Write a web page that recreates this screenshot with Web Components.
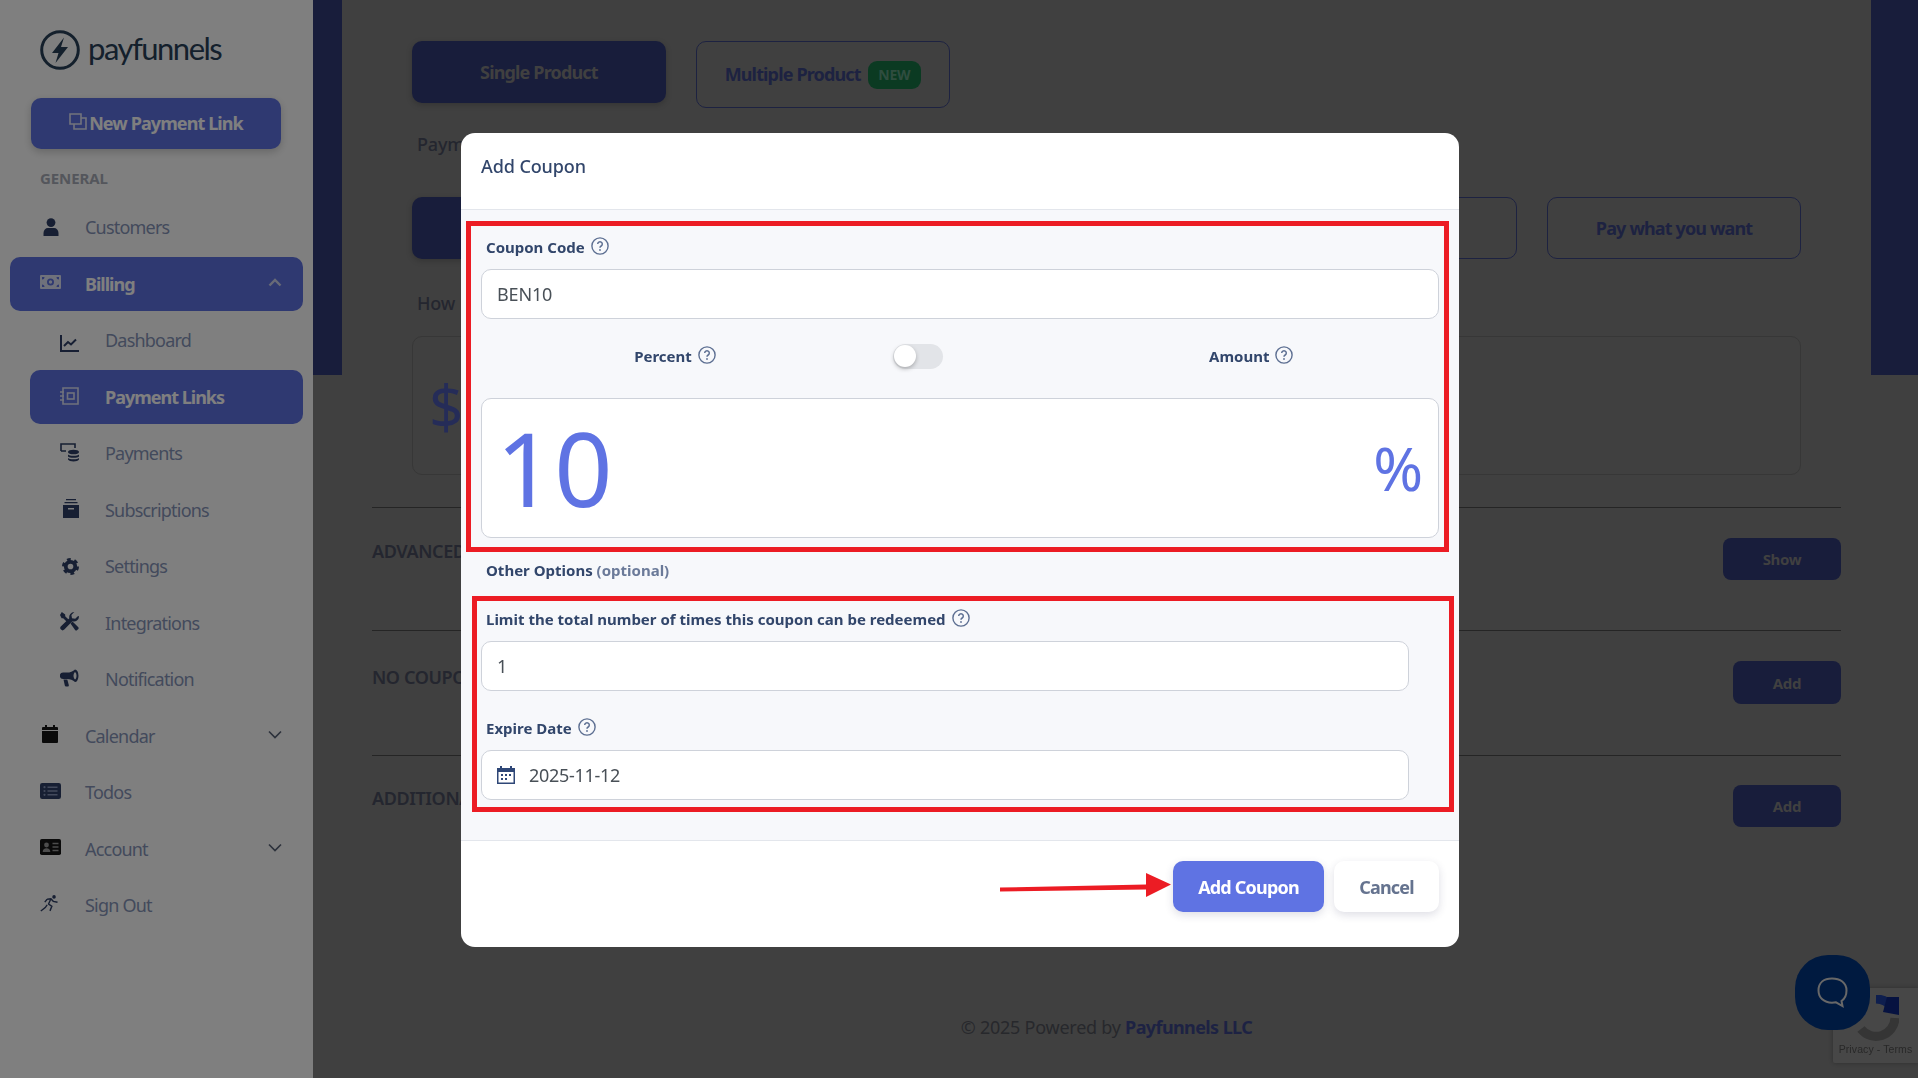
<!DOCTYPE html>
<html>
<head>
<meta charset="utf-8">
<title>Add Coupon</title>
<style>
html,body{margin:0;padding:0;height:100%;overflow:hidden;background:#808080;}
body{font-family:"Noto Sans","Open Sans",sans-serif;}
pf-page{display:grid;grid-template-columns:313px 1fr;height:1078px;}
</style>
</head>
<body>
<pf-page>
    <pf-sidebar></pf-sidebar>
    <pf-main></pf-main>
</pf-page>
<pf-widgets></pf-widgets>
<pf-backdrop></pf-backdrop>
<pf-modal></pf-modal>

<script>
const ICONS = {
    user:`<svg viewBox="0 0 16 18" width="16" height="18"><circle cx="8" cy="4.600" r="4.400" fill="currentColor"/><path d="M0.500 18V15c0-3 2-5 4.500-5h6c2.500 0 4.500 2 4.500 5v3z" fill="currentColor"/></svg>`,
    money:`<svg viewBox="0 0 21 14" width="21" height="14"><path fill-rule="evenodd" fill="currentColor" d="M1 0h19a1 1 0 0 1 1 1v12a1 1 0 0 1-1 1H1a1 1 0 0 1-1-1V1a1 1 0 0 1 1-1zM10.500 3.500a3.500 3.500 0 1 0 0 7 3.500 3.500 0 0 0 0-7zM2 2v2.500A2.500 2.500 0 0 0 4.500 2zM19 2h-2.500A2.500 2.500 0 0 0 19 4.500zM2 12h2.500A2.500 2.500 0 0 0 2 9.500zM19 12V9.500A2.500 2.500 0 0 0 16.500 12z"/><circle cx="10.500" cy="7" r="1.700" fill="currentColor"/></svg>`,
    chart:`<svg viewBox="0 0 19 17" width="19" height="17"><path d="M1 0v16h18" fill="none" stroke="currentColor" stroke-width="2"/><path d="M4 11l4-4 3 2.500 5-5" fill="none" stroke="currentColor" stroke-width="2"/></svg>`,
    notebook:`<svg viewBox="0 0 19 18" width="19" height="18"><path d="M3 1h15v16H3z" fill="none" stroke="currentColor" stroke-width="1.600"/><rect x="7.500" y="6" width="6.500" height="6" fill="none" stroke="currentColor" stroke-width="1.600"/><path d="M0 5h4M0 9h4M0 13h4" stroke="currentColor" stroke-width="1.600"/></svg>`,
    coins:`<svg viewBox="0 0 19 19" width="19" height="19"><path d="M1 8V1h14v4M1 8h5" fill="none" stroke="currentColor" stroke-width="1.600"/><ellipse cx="13.500" cy="9" rx="5.500" ry="2.300" fill="currentColor"/><path d="M8 11.500c1 1.800 10 1.800 11 0v2c-1 1.800-10 1.800-11 0zM8 15c1 1.800 10 1.800 11 0v1.500c-1 2.600-10 2.600-11 0z" fill="currentColor"/></svg>`,
    archive:`<svg viewBox="0 0 16 19" width="16" height="19"><path d="M3 0h10v1.300H3zM1.500 3h13v1.300h-13z" fill="currentColor"/><path fill-rule="evenodd" fill="currentColor" d="M0 6h16v13H0zM5 9v1.500h6V9z"/></svg>`,
    cog:`<svg viewBox="0 0 18 18" width="17" height="17"><circle cx="9" cy="9" r="5" fill="none" stroke="currentColor" stroke-width="4"/><circle cx="9" cy="9" r="7.600" fill="none" stroke="currentColor" stroke-width="2.800" stroke-dasharray="4 3.960"/></svg>`,
    tools:`<svg viewBox="0 0 19 19" width="19" height="19"><path d="M1.800 0L5.200 2.600v1.600l3.600 3.600-2 2-3.600-3.600H1.600L0 3z" fill="currentColor"/><path d="M10.500 11.500l2-2 5.600 5.600a1.500 1.500 0 0 1 0 2.100l-.9.900a1.500 1.500 0 0 1-2.100 0z" fill="currentColor"/><path d="M19 4.400a5 5 0 0 1-6.600 4.900L4.300 17.600a2.300 2.300 0 0 1-3.300-3.300L9.300 6.200A5 5 0 0 1 14.300 0.100L11.400 3l.6 3.200 3.200.6L18.100 3.900c.5.100.9.300.9.500z" fill="currentColor"/></svg>`,
    bullhorn:`<svg viewBox="0 0 19 18" width="19" height="18"><path d="M15 0.500a3.500 6.300 0 1 1 0 12.600c-2-2-5-3.200-8-3.200H3a3 3 0 0 1 0-6.300h4c3 0 6-1.100 8-3.100zm0 2.500c-1 1-1.500 2.300-1.500 3.800s.5 2.800 1.500 3.800c1-.7 1.500-2.200 1.500-3.800s-.5-3.100-1.500-3.800z" fill="currentColor" fill-rule="evenodd"/><path d="M3.500 10.500h3.800l1.500 5.500c.2 1-.5 1.500-1.200 1.500H6c-.6 0-1-.4-1.200-.9z" fill="currentColor"/></svg>`,
    calendar:`<svg viewBox="0 0 16 18" width="16" height="18"><path d="M3 0h2v3H3zM11 0h2v3h-2z" fill="currentColor"/><path d="M1 2h14a1 1 0 0 1 1 1v2H0V3a1 1 0 0 1 1-1zM0 6h16v11a1 1 0 0 1-1 1H1a1 1 0 0 1-1-1z" fill="currentColor"/></svg>`,
    list:`<svg viewBox="0 0 21 16" width="21" height="16"><rect width="21" height="16" rx="2.200" fill="currentColor"/><path d="M7.500 4.200h10M7.500 8h10M7.500 11.800h10" stroke="#8694b8" stroke-width="1.500"/><circle cx="4.500" cy="4.200" r="1.100" fill="#8694b8"/><circle cx="4.500" cy="8" r="1.100" fill="#8694b8"/><circle cx="4.500" cy="11.800" r="1.100" fill="#8694b8"/></svg>`,
    idcard:`<svg viewBox="0 0 21 16" width="21" height="16"><rect width="21" height="16" rx="1.800" fill="currentColor"/><circle cx="6.500" cy="6" r="2.400" fill="#9a9a9a"/><path d="M2.700 13c0-2.400 1.500-3.700 3.800-3.700s3.800 1.300 3.800 3.700z" fill="#9a9a9a"/><path d="M12.500 4.500h6M12.500 8h6M12.500 11.500h6" stroke="#9a9a9a" stroke-width="1.300"/></svg>`,
    runner:`<svg viewBox="0 0 20 18" width="19" height="17"><circle cx="14.800" cy="2" r="1.900" fill="currentColor"/><path d="M0.800 17l4.700-3.700 2-2.800M7.500 4.500l4-.6 2.500 2.800 4.500 1M11.500 4l-2.500 5.500 3.500 2.500-2 4.800M7.500 4.500L5 7.500" fill="none" stroke="currentColor" stroke-width="1.500"/></svg>`
};

const helpIcon = `<svg viewBox="0 0 18 18" width="18" height="18" style="flex:none;transform:translateY(-1px)"><circle cx="9" cy="9" r="8.100" fill="none" stroke="#5d6f92" stroke-width="1.400"/><path d="M6.700 7a2.300 2.300 0 1 1 3.500 2c-.8.500-1.200.9-1.200 1.800" fill="none" stroke="#5d6f92" stroke-width="1.500"/><circle cx="9" cy="13" r=".9" fill="#5d6f92"/></svg>`;

class PfNavItem extends HTMLElement{
    constructor(){
        super();
        this.attachShadow({mode: 'open'});
    }
    connectedCallback(){
        const active = this.hasAttribute("active");
        const chevron = this.getAttribute("chevron");
        const icon = ICONS[this.getAttribute("icon")] || "";
        const iconColor = this.getAttribute("icon-color") || "#2e3f66";
        const pad = this.getAttribute("ico-pad") || 0;
        const lift = this.getAttribute("ico-y") || 0;
        let chevronHtml = "";
        if(chevron === "up"){
            chevronHtml = `<svg class="chev" viewBox="0 0 14 9" width="14" height="9"><path d="M1.500 7.500L7 2l5.500 5.500" fill="none" stroke="#d0d5ee" stroke-width="2.400"/></svg>`;
        }
        else if(chevron === "down"){
            chevronHtml = `<svg class="chev" viewBox="0 0 14 9" width="14" height="9"><path d="M1 1.500L7 7.500l6-6" fill="none" stroke="#5a6478" stroke-width="1.700"/></svg>`;
        }
        this.shadowRoot.innerHTML = `
        <style>
        :host{display:block;margin-left:10px;}
        :host([sub]){margin-left:30px;}
        .row{
            display:flex;
            align-items:center;
            height:54px;
            border-radius:10px;
            padding:0 21px 0 30px;
            color:#8694b8;
            font-size:18px;
            letter-spacing:-.8px;
        }
        .row.active{background:#5f73e3;color:#fff;font-weight:700;letter-spacing:-1px;}
        .ico{box-sizing:border-box;width:45px;flex:none;display:flex;justify-content:flex-start;color:${iconColor};padding-left:${pad}px;transform:translateY(${lift}px);}
        .active .ico{color:#dfe3f7;}
        .label{flex:1;}
        .chev{flex:none;margin-bottom:3px;}
        </style>
        <div class="row ${active ? "active" : ""}">
            <span class="ico">${icon}</span>
            <span class="label"><slot></slot></span>
            ${chevronHtml}
        </div>
        `;
    }
}
customElements.define("pf-nav-item", PfNavItem);

class PfSidebar extends HTMLElement{
    constructor(){
        super();
        this.attachShadow({mode: 'open'});
        this.shadowRoot.innerHTML = `
        <style>
        :host{display:block;background:#fff;width:313px;height:1078px;}
        .logo{display:flex;align-items:center;gap:8px;margin:30px 0 0 40px;height:40px;color:#284058;}
        .logo span{font-family:Lato,sans-serif;font-size:31px;letter-spacing:-1.500px;line-height:36px;margin-bottom:4px;}
        .new{
            display:flex;align-items:center;justify-content:center;gap:2px;
            margin:28px 0 0 31px;width:250px;height:51px;border-radius:10px;
            background:#5f73e3;color:#fff;font-size:18px;font-weight:700;letter-spacing:-.9px;
            box-shadow:0 3px 8px rgba(0,0,0,.2);
        }
        .new span{margin-bottom:2px;}
        .new svg{margin-bottom:5px;color:#e4e7f8;}
        .head{margin:19px 0 0 40px;line-height:20px;font-size:15px;font-weight:700;color:#a8adb8;letter-spacing:-.1px;}
        nav{display:grid;row-gap:2.500px;margin-top:12px;width:303px;}
        </style>
        <div class="logo">
            <svg viewBox="0 0 40 40" width="40" height="40"><circle cx="20" cy="20" r="18.300" fill="none" stroke="currentColor" stroke-width="3"/><path d="M24 7.500L12 23h6.500L15.500 33 28 17h-7z" fill="currentColor"/></svg>
            <span>payfunnels</span>
        </div>
        <div class="new">
            <svg viewBox="0 0 18 17" width="18" height="17"><path d="M1 1h11v10H1z M5 11v5h12V5h-5" fill="none" stroke="currentColor" stroke-width="1.600"/></svg>
            <span>New Payment Link</span>
        </div>
        <div class="head">GENERAL</div>
        <nav>
            <pf-nav-item icon="user" ico-pad="3">Customers</pf-nav-item>
            <pf-nav-item icon="money" active chevron="up" ico-y="-2">Billing</pf-nav-item>
            <pf-nav-item sub icon="chart" ico-y="3">Dashboard</pf-nav-item>
            <pf-nav-item sub icon="notebook" active ico-y="-1">Payment Links</pf-nav-item>
            <pf-nav-item sub icon="coins" ico-y="-1">Payments</pf-nav-item>
            <pf-nav-item sub icon="archive" ico-pad="3" ico-y="-1">Subscriptions</pf-nav-item>
            <pf-nav-item sub icon="cog" ico-pad="2">Settings</pf-nav-item>
            <pf-nav-item sub icon="tools" ico-y="-1">Integrations</pf-nav-item>
            <pf-nav-item sub icon="bullhorn" ico-y="-1">Notification</pf-nav-item>
            <pf-nav-item icon="calendar" ico-pad="2" icon-color="#161616" chevron="down" ico-y="-2">Calendar</pf-nav-item>
            <pf-nav-item icon="list" ico-y="-1">Todos</pf-nav-item>
            <pf-nav-item icon="idcard" icon-color="#161616" chevron="down" ico-y="-2">Account</pf-nav-item>
            <pf-nav-item icon="runner" ico-y="-2">Sign Out</pf-nav-item>
        </nav>
        `;
    }
}
customElements.define("pf-sidebar", PfSidebar);

class PfSection extends HTMLElement{
    constructor(){
        super();
        this.attachShadow({mode: 'open'});
    }
    connectedCallback(){
        const h = this.getAttribute("h");
        const btnTop = this.getAttribute("btn-top");
        const labelTop = this.getAttribute("label-top");
        const btnW = this.getAttribute("btn-w");
        const btnH = this.getAttribute("btn-h");
        this.shadowRoot.innerHTML = `
        <style>
        :host{display:block;height:${h}px;box-sizing:border-box;border-top:1px solid #4b4b4b;}
        .wrap{display:flex;justify-content:space-between;align-items:flex-start;}
        .label{margin-top:${labelTop}px;font-size:18px;line-height:24px;font-weight:600;letter-spacing:-.4px;color:#484c5e;white-space:nowrap;}
        .btn{
            margin-top:${btnTop}px;width:${btnW}px;height:${btnH}px;border-radius:8px;background:#303a76;
            display:flex;align-items:center;justify-content:center;
            color:#808080;font-size:15px;font-weight:700;letter-spacing:-.3px;
        }
        </style>
        <div class="wrap">
            <div class="label"><slot></slot></div>
            <div class="btn">${this.getAttribute("btn")}</div>
        </div>
        `;
    }
}
customElements.define("pf-section", PfSection);

class PfMain extends HTMLElement{
    constructor(){
        super();
        this.attachShadow({mode: 'open'});
        this.shadowRoot.innerHTML = `
        <style>
        :host{display:block;position:relative;background:#808080;height:1078px;overflow:hidden;}
        .band{position:absolute;left:0;right:0;top:0;height:375px;background:#303a76;}
        .card{position:relative;margin:0 47px 0 29px;height:1078px;box-sizing:border-box;background:#808080;padding:41px 30px 0;}
        .grid{display:grid;grid-template-columns:repeat(5,1fr);gap:30px;margin:0 40px;align-items:start;}
        .tab{
            box-sizing:border-box;border-radius:10px;
            display:flex;align-items:center;justify-content:center;gap:7px;
            font-size:18px;font-weight:700;letter-spacing:-.85px;
        }
        .fill{background:#303a76;color:#808080;height:62px;box-shadow:0 2px 6px rgba(0,0,0,.2);}
        .line{border:1.500px solid #3b4583;color:#3b4583;height:67px;}
        .line span.t{margin-bottom:2px;}
        .new{background:#177445;color:#5e9a7e;font-size:14px;font-weight:700;width:53px;text-align:center;height:28px;line-height:28px;border-radius:9px;letter-spacing:-.3px;}
        .cap{padding-left:45px;font-size:18px;line-height:24px;color:#484c5e;font-weight:500;letter-spacing:-.2px;}
        .kind{height:62px;box-sizing:border-box;border-radius:10px;border:1.500px solid #3b4583;display:flex;align-items:center;justify-content:center;color:#3b4583;font-size:18px;font-weight:700;letter-spacing:-.85px;}
        .kind.fill{border:none;}
        .amount{margin:21px 40px 0;height:139px;box-sizing:border-box;border:1.500px solid #6e6e6e;border-radius:10px;display:flex;align-items:center;padding-left:16px;font-size:60px;color:#4a58b0;}
        footer{margin-top:135px;text-align:center;font-size:18px;line-height:24px;color:#4e5058;letter-spacing:-.25px;}
        footer b{font-weight:700;color:#3a4586;letter-spacing:-.6px;}
        </style>
        <div class="band"></div>
        <div class="card">
            <div class="grid">
                <div class="tab fill">Single Product</div>
                <div class="tab line"><span class="t">Multiple Product</span><span class="new">NEW</span></div>
            </div>
            <div class="cap" style="margin-top:24px">Payment</div>
            <div class="grid" style="margin-top:41px">
                <div class="kind fill"></div>
                <div class="kind"></div>
                <div class="kind"></div>
                <div class="kind"></div>
                <div class="kind">Pay what you want</div>
            </div>
            <div class="cap" style="margin-top:32px">How</div>
            <div class="amount">$</div>
            <div style="margin-top:32px">
                <pf-section h="123" label-top="31" btn-top="30" btn="Show" btn-w="118" btn-h="42">ADVANCED</pf-section>
                <pf-section h="125" label-top="34" btn-top="30" btn="Add" btn-w="108" btn-h="43">NO COUPON</pf-section>
                <pf-section h="125" label-top="30" btn-top="29" btn="Add" btn-w="108" btn-h="42">ADDITIONAL</pf-section>
            </div>
            <footer>© 2025 Powered by <b>Payfunnels LLC</b></footer>
        </div>
        `;
    }
}
customElements.define("pf-main", PfMain);

class PfWidgets extends HTMLElement{
    constructor(){
        super();
        this.attachShadow({mode: 'open'});
        this.shadowRoot.innerHTML = `
        <style>
        :host{display:block;}
        .captcha{
            position:fixed;left:1833px;top:988px;width:85px;height:75px;background:#8e8e8e;border-radius:2px 0 0 2px;
            box-shadow:0 0 5px rgba(0,0,0,.3);text-align:center;
            font-family:"Liberation Sans",sans-serif;font-size:10.500px;letter-spacing:.1px;color:#505050;white-space:nowrap;
        }
        .captcha svg{display:block;margin:7px auto 2px;}
        .chat{
            position:fixed;left:1795px;top:955px;width:75px;height:75px;border-radius:33px;background:#003480;
            display:flex;align-items:center;justify-content:center;
        }
        </style>
        <div class="captcha">
            <svg viewBox="0 0 46 46" width="46" height="46">
                <path d="M23 4a19 19 0 0 1 16 9" fill="none" stroke="#1c3c9c" stroke-width="9"/>
                <path d="M34 2l12 0 0 18-16-3z" fill="#0c2580"/>
                <path d="M42 23a19 19 0 0 1-34 11" fill="none" stroke="#6a6a6a" stroke-width="9"/>
                <path d="M4 27l-4 0 6-16 7 8z" fill="#4672cc"/>
            </svg>
            Privacy - Terms
        </div>
        <div class="chat">
            <svg viewBox="0 0 34 34" width="34" height="34"><path d="M16 2.500c8 0 14.500 4.200 14.500 12 0 5-2 8.500-5 10.500l1 5-6.500-3.700c-1.300.3-2.600.4-4 .4-8 0-13.500-5-13.500-12.200C2.500 6.700 8 2.500 16 2.500z" fill="none" stroke="#d0d0d0" stroke-width="2"/></svg>
        </div>
        `;
    }
}
customElements.define("pf-widgets", PfWidgets);

class PfBackdrop extends HTMLElement{
    constructor(){
        super();
        this.attachShadow({mode: 'open'});
        this.shadowRoot.innerHTML = `<style>:host{display:block;position:fixed;inset:0;background:rgba(0,0,0,.5);}</style>`;
    }
}
customElements.define("pf-backdrop", PfBackdrop);

class PfLabel extends HTMLElement{
    constructor(){
        super();
        this.attachShadow({mode: 'open'});
        this.shadowRoot.innerHTML = `
        <style>
        :host{display:flex;align-items:center;gap:6px;height:20px;font-size:15px;font-weight:700;letter-spacing:0;color:#32466b;white-space:nowrap;}
        </style>
        <span><slot></slot></span>${helpIcon}
        `;
    }
}
customElements.define("pf-label", PfLabel);

class PfInput extends HTMLElement{
    constructor(){
        super();
        this.attachShadow({mode: 'open'});
        this.shadowRoot.innerHTML = `
        <style>
        :host{display:flex;align-items:center;gap:14px;box-sizing:border-box;height:50px;padding:0 15px;background:#fff;border:1px solid #ced2da;border-radius:10px;font-size:18px;letter-spacing:-.15px;color:#495057;}
        </style>
        <slot name="icon"></slot><slot></slot>
        `;
    }
}
customElements.define("pf-input", PfInput);

class PfModal extends HTMLElement{
    constructor(){
        super();
        this.attachShadow({mode: 'open'});
        this.shadowRoot.innerHTML = `
        <style>
        :host{
            display:flex;flex-direction:column;position:fixed;left:461px;top:133px;width:998px;height:814px;
            background:#fff;border-radius:14px;overflow:hidden;color:#32466b;font-family:"Noto Sans","Open Sans",sans-serif;
        }
        header{flex:none;display:flex;align-items:center;padding:0 20px 10px;font-size:18px;font-weight:500;letter-spacing:-.1px;border-bottom:1px solid #e3e6ec;box-sizing:border-box;height:77px;}
        .body{flex:1;background:#f7f8fb;padding:27px 20px 0;}
        .lab{margin-left:5px;}
        pf-input{margin-top:12px;}
        .short{width:928px;}
        .switch{display:grid;grid-template-columns:388px 98px 1fr;align-items:center;height:74px;margin-bottom:5px;}
        .switch .left{justify-self:center;}
        .switch .right{justify-self:start;margin-left:242px;}
        .toggle{justify-self:center;width:50px;height:25px;border-radius:13px;background:#e2e4e8;position:relative;}
        .toggle i{position:absolute;left:1px;top:1.500px;width:22px;height:22px;border-radius:50%;background:#fff;box-shadow:0 2px 4px rgba(0,0,0,.25);}
        .big{box-sizing:border-box;height:140px;background:#fff;border:1px solid #ced2da;border-radius:10px;display:flex;align-items:center;justify-content:space-between;padding:0 15px 0 14px;color:#5f73e3;}
        .big .n{font-size:102px;line-height:120px;}
        .big .p{font-size:60px;line-height:70px;}
        .other{margin:22px 0 0 5px;line-height:20px;font-size:15px;font-weight:700;}
        .other span{color:#6b7a99;}
        .foot{height:107px;flex:none;box-sizing:border-box;border-top:1px solid #e3e6ec;display:flex;justify-content:flex-end;gap:10px;padding:20px 20px 0;}
        .btn{height:51px;border-radius:10px;display:flex;align-items:center;justify-content:center;font-size:18px;font-weight:700;letter-spacing:-.8px;box-shadow:0 3px 8px rgba(50,50,93,.16);}
        .add{width:151px;background:#5f73e3;color:#fff;}
        .cancel{width:105px;background:#fff;color:#65738f;}
        .mark{position:absolute;box-sizing:border-box;border:5px solid #ec1c24;pointer-events:none;}
        .arrow{position:absolute;left:539px;top:738px;}
        </style>
        <header>Add Coupon</header>
        <div class="body">
            <pf-label class="lab">Coupon Code</pf-label>
            <pf-input>BEN10</pf-input>
            <div class="switch">
                <pf-label class="left">Percent</pf-label>
                <div class="toggle"><i></i></div>
                <pf-label class="right">Amount</pf-label>
            </div>
            <div class="big"><span class="n">10</span><span class="p">%</span></div>
            <div class="other">Other Options <span>(optional)</span></div>
            <pf-label class="lab" style="margin-top:29px">Limit the total number of times this coupon can be redeemed</pf-label>
            <pf-input class="short">1</pf-input>
            <pf-label class="lab" style="margin-top:27px">Expire Date</pf-label>
            <pf-input class="short" style="letter-spacing:-.3px">
                <svg slot="icon" viewBox="0 0 18 18" width="18" height="18"><path d="M3 0h2v2h8V0h2v2h3v16H0V2h3z" fill="#2f4777"/><rect x="1.500" y="6" width="15" height="10.500" fill="#fff"/><path d="M4 8h2v2H4zM8 8h2v2H8zM12 8h2v2h-2zM4 12h2v2H4zM8 12h2v2H8z" fill="#2f4777"/></svg>
                2025-11-12
            </pf-input>
        </div>
        <div class="foot">
            <div class="btn add">Add Coupon</div>
            <div class="btn cancel">Cancel</div>
        </div>
        <div class="mark" style="left:5px;top:88px;width:983px;height:331px"></div>
        <div class="mark" style="left:11px;top:463px;width:982px;height:216px"></div>
        <svg class="arrow" viewBox="0 0 172 30" width="172" height="30"><path d="M0 16.500L146 13.500V2L171 13.500 146 26V18.500L0 20.500z" fill="#ec1c24"/></svg>
        `;
    }
}
customElements.define("pf-modal", PfModal);
</script>
</body>
</html>
